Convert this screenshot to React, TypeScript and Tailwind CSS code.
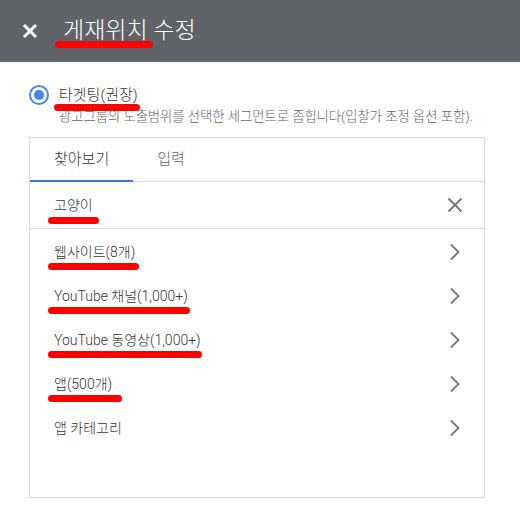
import React from 'react';

const items = [
    { label: '웹사이트(8개)', mark: 'w-[91px]' },
    { label: 'YouTube 채널(1,000+)', mark: 'w-[142px]' },
    { label: 'YouTube 동영상(1,000+)', mark: 'w-[154px]' },
    { label: '앱(500개)', mark: 'w-[74px]' },
    { label: '앱 카테고리', mark: '' },
];

function Chevron() {
    return (
        <svg width="12" height="18" viewBox="0 0 12 18" fill="none">
            <path d="M2 1.5 L9.5 9 L2 16.5" stroke="#757575" strokeWidth="1.8" />
        </svg>
    );
}

export default function App() {
    return (
        <div className="w-[520px] h-[518px] bg-white font-['Roboto','Noto_Sans_CJK_KR',sans-serif] font-light text-[#333333]">
            <header className="h-[62px] bg-[#606368] flex items-center pl-[22px]">
                <svg width="16" height="16" viewBox="0 0 16 16">
                    <path d="M2 2 L14 14 M14 2 L2 14" stroke="#fff" strokeWidth="3" />
                </svg>
                <div className="relative ml-[25px]">
                    <h1 className="text-[23px] text-white leading-none pb-[2px]">게재위치 수정</h1>
                    <span className="absolute left-[-8px] top-[22px] w-[98px] h-[7px] rounded-full bg-[#ff0000]" />
                </div>
            </header>

            <div className="pl-[29px] pt-[22px]">
                <div className="flex items-start">
                    <div className="w-[20px] h-[20px] rounded-full border-2 border-[#4285f4] flex items-center justify-center mt-[1px]">
                        <div className="w-[10px] h-[10px] rounded-full bg-[#4285f4]" />
                    </div>
                    <div className="ml-[10px]">
                        <div className="relative text-[15px] leading-[20px] pt-[1px]">
                            타겟팅(권장)
                            <span className="absolute left-[-5px] top-[20px] w-[86px] h-[7px] rounded-full bg-[#ff0000]" />
                        </div>
                        <p className="text-[13.3px] leading-[18px] text-[#5f6368] mt-[3px]">
                            광고그룹의 노출범위를 선택한 세그먼트로 좁힙니다(입찰가 조정 옵션 포함).
                        </p>
                    </div>
                </div>

                <div className="w-[456px] h-[361px] mt-[11px] border border-[#dadce0]">
                    <div className="flex h-[44px] border-b border-[#dadce0] text-[15px]">
                        <div className="px-6 flex items-center border-b-2 border-[#3574e3] mb-[-1px] text-[#333333]">찾아보기</div>
                        <div className="px-6 flex items-center text-[#666666]">입력</div>
                    </div>

                    <div className="h-[47px] border-b border-[#dadce0] flex items-center justify-between pl-6 pr-[21px]">
                        <div className="relative text-[14px]">
                            고양이
                            <span className="absolute left-[-6px] top-[22px] w-[51px] h-[7px] rounded-full bg-[#ff0000]" />
                        </div>
                        <svg width="16" height="16" viewBox="0 0 16 16">
                            <path d="M1.5 1.5 L14.5 14.5 M14.5 1.5 L1.5 14.5" stroke="#757575" strokeWidth="1.8" />
                        </svg>
                    </div>

                    <div className="pt-[1px]">
                        {items.map((item) => (
                            <div key={item.label} className="h-[44px] flex items-center justify-between pl-6 pr-[23px]">
                                <div className="relative text-[14px]">
                                    {item.label}
                                    {item.mark && (
                                        <span className={`absolute left-[-6px] top-[21px] h-[7px] rounded-full bg-[#ff0000] ${item.mark}`} />
                                    )}
                                </div>
                                <Chevron />
                            </div>
                        ))}
                    </div>
                </div>
            </div>
        </div>
    );
}
